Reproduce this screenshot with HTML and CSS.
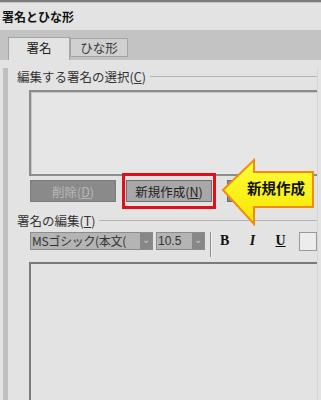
FILE: index.html
```html
<!DOCTYPE html>
<html lang="ja">
<head>
    <meta charset="UTF-8">
    <meta name="viewport" content="width=device-width, initial-scale=1.0">
    <title>署名とひな形</title>
    <link rel="stylesheet" href="styles.css">
</head>
<body>
    <div class="topline"></div>
    <div class="title">署名とひな形</div>
    <div class="tabbar">
        <div class="tab active">署名</div>
        <div class="tab">ひな形</div>
    </div>
    <div class="panel">
        <div class="group-label"><span>編集する署名の選択(<u>C</u>)</span></div>
        <div class="listbox"></div>
        <div class="buttons">
            <button class="btn disabled">削除(<u>D</u>)</button>
            <span class="highlight"><button class="btn">新規作成(<u>N</u>)</button></span>
            <button class="btn dark"></button>
        </div>
        <div class="group-label edit-label"><span>署名の編集(<u>T</u>)</span></div>
        <div class="toolbar">
            <div class="combo font-combo"><span class="combo-text">MSゴシック(本文(</span><span class="drop">&#8964;</span></div>
            <div class="combo size-combo"><span class="combo-text">10.5</span><span class="drop">&#8964;</span></div>
            <div class="sep"></div>
            <span class="fmt bold">B</span>
            <span class="fmt italic">I</span>
            <span class="fmt under">U</span>
            <div class="color-box"></div>
        </div>
        <div class="editor"></div>
    </div>
    <svg class="callout" width="100" height="74" viewBox="0 0 100 74">
        <defs>
            <linearGradient id="yel" x1="0" y1="0" x2="0" y2="1">
                <stop offset="0" stop-color="#ffff3a"/>
                <stop offset="1" stop-color="#f6e400"/>
            </linearGradient>
        </defs>
        <polygon points="3,34 34,4 34,16 93,16 93,51 34,51 34,68" fill="url(#yel)" stroke="#f08c10" stroke-width="2" stroke-linejoin="miter"/>
        <text x="27" y="38" class="callout-text">新規作成</text>
    </svg>
</body>
</html>
```

FILE: styles.css
```css
body {
    margin: 0;
    width: 321px;
    height: 400px;
    overflow: hidden;
    position: relative;
    background-color: #e3e3e3;
    font-family: "Noto Sans CJK JP", "Noto Sans", sans-serif;
    color: #2a2a2a;
}
.topline {
    height: 2px;
    background-color: #7c7c7c;
    border-bottom: 1px solid #c4c4c4;
}
.title {
    height: 27px;
    line-height: 27px;
    padding-left: 2px;
    font-size: 12px;
    font-weight: bold;
    color: #111;
}
.tabbar {
    height: 30px;
    background-color: #c3c3c3;
    display: flex;
    align-items: flex-end;
    padding-left: 8px;
}
.tab {
    box-sizing: border-box;
    width: 58px;
    height: 19px;
    margin-bottom: 3px;
    background-color: #d0d0d0;
    border: 1px solid #a4a4a4;
    font-size: 12.5px;
    line-height: 17px;
    text-align: center;
    color: #3a3a3a;
}
.tab.active {
    width: 62px;
    height: 23px;
    margin-bottom: 0;
    background-color: #e3e3e3;
    border-bottom: none;
    line-height: 20px;
    color: #222;
}
.panel {
    margin-left: 3px;
    border-left: 5px solid #c0c0c0;
    border-right: 1px solid #d6d6d6;
    margin-right: 3px;
    height: 340px;
}
.group-label {
    display: flex;
    align-items: center;
    margin-top: 8px;
    padding-left: 9px;
    height: 16px;
    font-size: 12.5px;
    color: #333;
}
.group-label::after {
    content: "";
    flex: 1;
    height: 1px;
    margin-left: 4px;
    margin-top: 1px;
    background-color: #b4b4b4;
}
.listbox {
    box-sizing: border-box;
    margin: 6px 0 0 21px;
    height: 86px;
    border: 2px solid #8c8c8c;
    border-right: none;
    box-shadow: inset 1px 1px 0 #c8c8c8;
    background-color: #e6e6e6;
}
.buttons {
    display: flex;
    align-items: center;
    height: 22px;
    margin-top: 4px;
    padding-left: 22px;
}
.btn {
    box-sizing: border-box;
    width: 86px;
    height: 22px;
    padding: 0;
    font-family: inherit;
    font-size: 12.5px;
    border: 1px solid #6e6e6e;
    background-color: #a8a8a8;
    color: #222;
}
.btn.disabled {
    background-color: #8a8a8a;
    color: #b8b8b8;
    border-color: #7c7c7c;
}
.btn.dark {
    width: 40px;
    margin-left: 11px;
    background-color: #8a8a8a;
}
.highlight {
    display: block;
    margin: -7px 0 -7px 6px;
    padding: 4px 1px;
    border: 3px solid #e0101a;
}
.highlight .btn {
    display: block;
}
.edit-label {
    margin-top: 10px;
}
.toolbar {
    display: flex;
    align-items: center;
    height: 18px;
    margin-top: 4px;
    padding-left: 22px;
}
.combo {
    display: flex;
    height: 16px;
    border: 1px solid #8c8c8c;
    background-color: #b4b4b4;
}
.combo-text {
    font-size: 12px;
    line-height: 16px;
    padding-left: 1px;
    color: #333;
    white-space: nowrap;
}
.font-combo .combo-text {
    width: 108px;
    letter-spacing: -0.3px;
}
.size-combo {
    margin-left: 3px;
}
.size-combo .combo-text {
    width: 34px;
    font-family: "Liberation Sans", sans-serif;
}
.drop {
    width: 12px;
    background-color: #878787;
    color: #c8c8c8;
    font-size: 10px;
    line-height: 12px;
    text-align: center;
}
.sep {
    width: 1px;
    height: 25px;
    margin: 0 8px 0 5px;
    background-color: #8c8c8c;
    border-right: 1px solid #f2f2f2;
    position: relative;
    top: 3px;
}
.fmt {
    width: 12px;
    margin-right: 18px;
    font-family: "Liberation Serif", serif;
    font-weight: bold;
    font-size: 14px;
    text-align: center;
    color: #111;
}
.italic {
    font-style: italic;
}
.under {
    text-decoration: underline;
    margin-right: 13px;
}
.color-box {
    width: 20px;
    height: 17px;
    border: 1px solid #9a9a9a;
    background-color: #ececec;
}
.editor {
    margin: 12px 0 0 21px;
    height: 150px;
    border-top: 2px solid #7a7a7a;
    border-left: 2px solid #7a7a7a;
    background-color: #e3e3e3;
}
.callout {
    position: absolute;
    left: 220px;
    top: 156px;
}
.callout-text {
    font-family: "Noto Sans CJK JP", sans-serif;
    font-weight: bold;
    font-size: 14.5px;
    fill: #111;
}
```
